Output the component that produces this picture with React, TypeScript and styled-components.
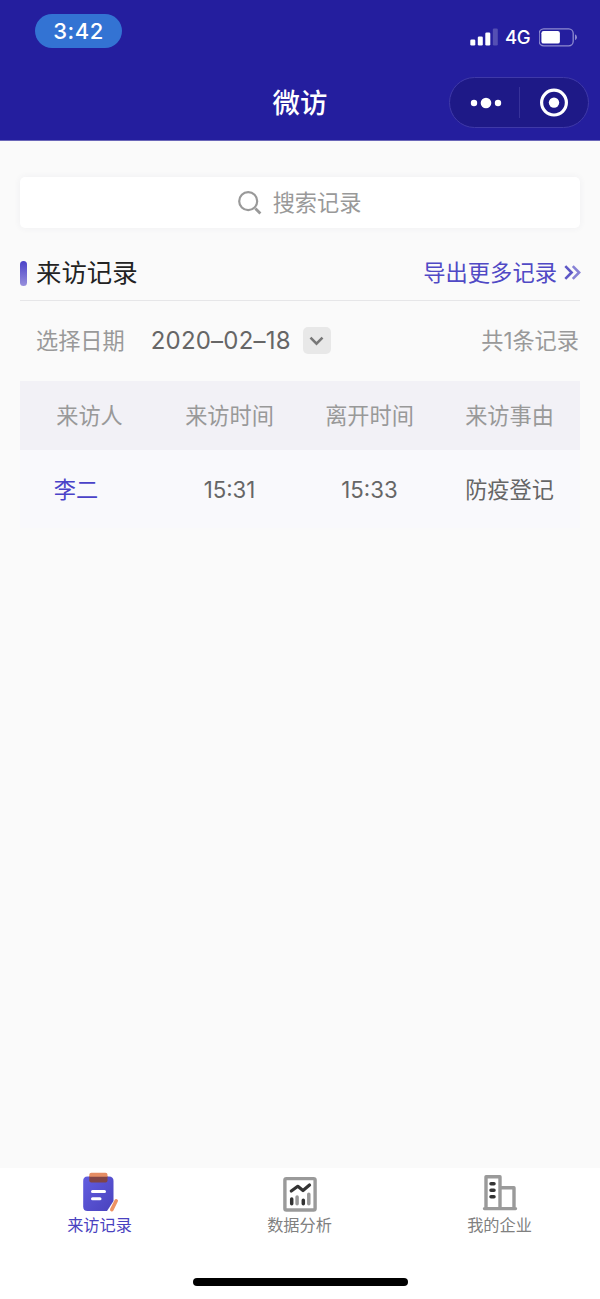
import React from 'react';
import styled, { createGlobalStyle } from 'styled-components';

const GlobalStyle = createGlobalStyle`
  *, *::before, *::after { box-sizing: border-box; }
  body {
    margin: 0;
    background: #fafafa;
    font-family: Inter, "Noto Sans CJK SC", sans-serif;
    -webkit-font-smoothing: antialiased;
  }
`;

const Screen = styled.div`
  display: flex;
  flex-direction: column;
  width: 600px;
  height: 1299px;
  background: #fafafa;
  overflow: hidden;
`;

const Header = styled.header`
  height: 141px;
  flex: none;
  background: #241e9e;
  border-bottom: 1px solid #6a66b8;
  color: #fff;
`;

const StatusBar = styled.div`
  display: flex;
  justify-content: space-between;
  align-items: flex-start;
  height: 77px;
  padding: 14px 22px 0 35px;
`;

const TimePill = styled.div`
  width: 87px;
  height: 34px;
  border-radius: 17px;
  background: #3373d3;
  font-size: 22px;
  font-weight: 500;
  line-height: 34px;
  letter-spacing: 0.5px;
  text-align: center;
`;

const Signals = styled.div`
  display: flex;
  align-items: center;
  height: 24px;
  margin-top: 11px;
`;

const Network = styled.span`
  width: 26px;
  margin: 0 8px 1px 7px;
  font-size: 18.5px;
  font-weight: 500;
  line-height: 24px;
  letter-spacing: -0.3px;
  white-space: nowrap;
`;

const NavBar = styled.div`
  display: grid;
  grid-template-columns: 151px 1fr 140px;
  align-items: center;
  height: 51px;
  padding-right: 11px;
`;

const Title = styled.h1`
  grid-column: 2;
  margin: 0;
  font-size: 27.4px;
  font-weight: 500;
  line-height: 50px;
  text-align: center;
`;

const Capsule = styled.div`
  display: flex;
  align-items: center;
  height: 51px;
  border: 1px solid #3f39a8;
  border-radius: 26px;
  background: #1e1987;
`;

const CapsuleButton = styled.div<{ $divided?: boolean }>`
  display: flex;
  align-items: center;
  justify-content: center;
  width: ${(p) => (p.$divided ? 70 : 68)}px;
  height: 31px;
  padding-left: ${(p) => (p.$divided ? 3 : 0)}px;
  border-right: ${(p) => (p.$divided ? '1px solid #37329a' : 'none')};
`;

const Content = styled.main`
  flex: 1;
  padding: 36px 20px 0;
`;

const SearchBox = styled.div`
  display: flex;
  align-items: center;
  justify-content: center;
  gap: 11px;
  height: 51px;
  padding-right: 1px;
  border-radius: 5px;
  background: #fff;
  box-shadow: 0 0 7px rgba(60, 60, 100, 0.06);
  color: #999;
  font-size: 22.2px;
  line-height: 49px;
`;

const SectionHead = styled.div`
  display: flex;
  align-items: center;
  height: 73px;
  padding-top: 17px;
  border-bottom: 1px solid #e6e6e8;
`;

const Accent = styled.span`
  width: 7px;
  height: 25px;
  margin: 1px 9px 0 0;
  border-radius: 3.5px;
  background: linear-gradient(#4a42c8, #978fdc);
`;

const SectionTitle = styled.h2`
  margin: 0;
  color: #222;
  font-size: 25.4px;
  font-weight: 400;
  line-height: 34px;
`;

const ExportLink = styled.a`
  display: flex;
  align-items: center;
  gap: 7px;
  margin: 0 -1px 0 auto;
  color: #5049c5;
  font-size: 22.3px;
  line-height: 34px;
`;

const FilterRow = styled.div`
  display: flex;
  align-items: center;
  height: 80px;
  padding: 0 1px 0 16px;
  color: #999;
  font-size: 22.2px;
  line-height: 32px;
`;

const FilterLabel = styled.span`
  padding-bottom: 1px;
`;

const DateValue = styled.span`
  width: 152px;
  margin-left: 26px;
  padding-bottom: 1px;
  color: #666;
  font-size: 24px;
  letter-spacing: 0.2px;
  white-space: nowrap;
`;

const DropButton = styled.span`
  display: flex;
  align-items: center;
  justify-content: center;
  width: 28px;
  height: 27px;
  margin-bottom: 1px;
  border-radius: 5px;
  background: #e8e8e8;
`;

const Count = styled.span`
  margin-left: auto;
  padding-bottom: 1px;
`;

const TableRow = styled.div<{ $head?: boolean }>`
  display: grid;
  grid-template-columns: repeat(4, 140px);
  align-items: center;
  height: ${(p) => (p.$head ? 69 : 78)}px;
  background: ${(p) => (p.$head ? '#f2f1f6' : '#f9f9fc')};
  color: ${(p) => (p.$head ? '#999' : '#666')};
  font-size: 22.2px;
  line-height: 33px;
  text-align: center;
`;

const Cell = styled.span<{ $name?: boolean }>`
  padding-right: ${(p) => (p.$name ? 28 : 1)}px;
  color: ${(p) => (p.$name ? '#4a42c8' : 'inherit')};
`;

const TabBar = styled.nav`
  display: grid;
  grid-template-columns: repeat(3, 1fr);
  flex: none;
  height: 110px;
  background: #fff;
`;

const Tab = styled.div<{ $active?: boolean }>`
  display: flex;
  flex-direction: column;
  align-items: center;
  color: ${(p) => (p.$active ? '#4a42c0' : '#808080')};
  font-size: 16.2px;
  line-height: 22px;
`;

const TabLabel = styled.span`
  padding-right: 1px;
`;

const HomeArea = styled.div`
  display: flex;
  justify-content: center;
  flex: none;
  height: 21px;
  background: #fff;
`;

const HomeIndicator = styled.div`
  width: 215px;
  height: 8px;
  border-radius: 4px;
  background: #000;
`;

const SignalIcon = () => (
  <svg width="28" height="18" viewBox="0 0 28 18" fill="#fff">
    <rect x="0.3" y="11.5" width="5" height="6" rx="1.3" />
    <rect x="7.8" y="8.5" width="5" height="9" rx="1.3" />
    <rect x="15.3" y="4.5" width="5" height="13" rx="1.3" />
    <rect x="22.8" y="0.5" width="5" height="17" rx="1.3" opacity="0.22" />
  </svg>
);

const BatteryIcon = () => (
  <svg width="39" height="19" viewBox="0 0 39 19">
    <rect x="0.2" y="0.8" width="34" height="17" rx="4.5" fill="none" stroke="#8e8bcf" strokeWidth="1.3" />
    <rect x="2.4" y="3" width="18.5" height="12.6" rx="2.2" fill="#fff" />
    <path d="M36 6.3Q38 7.2 38 9.3T36 12.3Z" fill="#8e8bcf" />
  </svg>
);

const MoreIcon = () => (
  <svg width="32" height="12" viewBox="0 0 32 12" fill="#fff">
    <circle cx="4" cy="6" r="3.2" />
    <circle cx="16" cy="6" r="5.3" />
    <circle cx="28" cy="6" r="3.2" />
  </svg>
);

const TargetIcon = () => (
  <svg width="30" height="30" viewBox="0 0 30 30">
    <circle cx="15" cy="14.6" r="12.4" fill="none" stroke="#fff" strokeWidth="3.2" />
    <circle cx="15" cy="14.6" r="5.2" fill="#fff" />
  </svg>
);

const SearchIcon = () => (
  <svg width="24" height="24" viewBox="0 0 24 24" fill="none" stroke="#999">
    <circle cx="10.2" cy="10.2" r="9" strokeWidth="2.2" />
    <path d="M17.4 17.4L22.4 22.4" strokeWidth="2.8" />
  </svg>
);

const DoubleChevron = () => (
  <svg width="17" height="16" viewBox="0 0 17 16" fill="none" strokeWidth="2.6">
    <path d="M1.3 1.2L7.6 7.5L1.3 13.8" stroke="#5d57c6" />
    <path d="M8.8 1.2L15.1 7.5L8.8 13.8" stroke="#8782d5" />
  </svg>
);

const ChevronDown = () => (
  <svg width="15" height="10" viewBox="0 0 15 10" fill="none">
    <path d="M1.5 1.7L7.5 7.7L13.5 1.7" stroke="#777" strokeWidth="2.6" />
  </svg>
);

const ClipboardIcon = () => (
  <svg width="40" height="46" viewBox="0 0 40 46">
    <defs>
      <linearGradient id="board" x1="0" y1="0" x2="1" y2="1">
        <stop offset="0" stopColor="#625de0" />
        <stop offset="1" stopColor="#4942bd" />
      </linearGradient>
    </defs>
    <path d="M7.5 8.5H29Q33.5 8.5 33.5 13V33L27 43H7.5Q3.2 43 3.2 38.5V13Q3.2 8.5 7.5 8.5Z" fill="url(#board)" />
    <path d="M9.3 8H27.5V12.500Q27.500 14.500 25.500 14.500H11.300Q9.300 14.500 9.300 12.500Z" fill="#804446" />
    <path d="M9.300 8.700V6.700Q9.300 4.700 11.300 4.700H25.500Q27.500 4.700 27.500 6.700V8.700Z" fill="#e58d64" />
    <path d="M12.500 23.500H24.500M12.500 30.700H20" stroke="#fff" strokeWidth="3" strokeLinecap="round" />
    <path d="M36.200 32.800L31.800 41.600" stroke="#ed9263" strokeWidth="3.600" strokeLinecap="round" />
  </svg>
);

const ChartIcon = () => (
  <svg width="40" height="46" viewBox="0 0 40 46" fill="none">
    <rect x="4.9" y="10.6" width="30.2" height="31.4" rx="1.5" stroke="#9a9a9a" strokeWidth="3.4" />
    <path d="M11.300 23L17.800 18.300L23 22.500L29.500 17" stroke="#333" strokeWidth="3.200" strokeLinecap="round" strokeLinejoin="round" />
    <path d="M11.700 31V35.700M23.300 32.200V35.700" stroke="#333" strokeWidth="3.500" strokeLinecap="round" />
    <path d="M17.100 29V35.700M28.800 26.300V35.700" stroke="#999" strokeWidth="3.500" strokeLinecap="round" />
  </svg>
);

const BuildingIcon = () => (
  <svg width="40" height="46" viewBox="0 0 40 46" fill="none" strokeLinecap="round" strokeLinejoin="round">
    <path d="M6 40V8.700H20V40M20 19.700H34V40M4.500 40.600H35.500" stroke="#9a9a9a" strokeWidth="3.400" />
    <path d="M11 15.800H14M11 22.200H14M11 28.800H14" stroke="#333" strokeWidth="3.500" />
  </svg>
);

const columns = ['来访人', '来访时间', '离开时间', '来访事由'];
const records = [{ name: '李二', arrive: '15:31', leave: '15:33', reason: '防疫登记' }];

const tabs = [
  { label: '来访记录', Icon: ClipboardIcon, active: true },
  { label: '数据分析', Icon: ChartIcon, active: false },
  { label: '我的企业', Icon: BuildingIcon, active: false },
];

export default function App() {
  return (
    <Screen>
      <GlobalStyle />
      <Header>
        <StatusBar>
          <TimePill>3:42</TimePill>
          <Signals>
            <SignalIcon />
            <Network>4G</Network>
            <BatteryIcon />
          </Signals>
        </StatusBar>
        <NavBar>
          <Title>微访</Title>
          <Capsule>
            <CapsuleButton $divided>
              <MoreIcon />
            </CapsuleButton>
            <CapsuleButton>
              <TargetIcon />
            </CapsuleButton>
          </Capsule>
        </NavBar>
      </Header>
      <Content>
        <SearchBox>
          <SearchIcon />
          <span>搜索记录</span>
        </SearchBox>
        <SectionHead>
          <Accent />
          <SectionTitle>来访记录</SectionTitle>
          <ExportLink>
            导出更多记录
            <DoubleChevron />
          </ExportLink>
        </SectionHead>
        <FilterRow>
          <FilterLabel>选择日期</FilterLabel>
          <DateValue>2020–02–18</DateValue>
          <DropButton>
            <ChevronDown />
          </DropButton>
          <Count>共1条记录</Count>
        </FilterRow>
        <TableRow $head>
          {columns.map((c) => (
            <Cell key={c}>{c}</Cell>
          ))}
        </TableRow>
        {records.map((r) => (
          <TableRow key={r.name}>
            <Cell $name>{r.name}</Cell>
            <Cell>{r.arrive}</Cell>
            <Cell>{r.leave}</Cell>
            <Cell>{r.reason}</Cell>
          </TableRow>
        ))}
      </Content>
      <TabBar>
        {tabs.map(({ label, Icon, active }) => (
          <Tab key={label} $active={active}>
            <Icon />
            <TabLabel>{label}</TabLabel>
          </Tab>
        ))}
      </TabBar>
      <HomeArea>
        <HomeIndicator />
      </HomeArea>
    </Screen>
  );
}
